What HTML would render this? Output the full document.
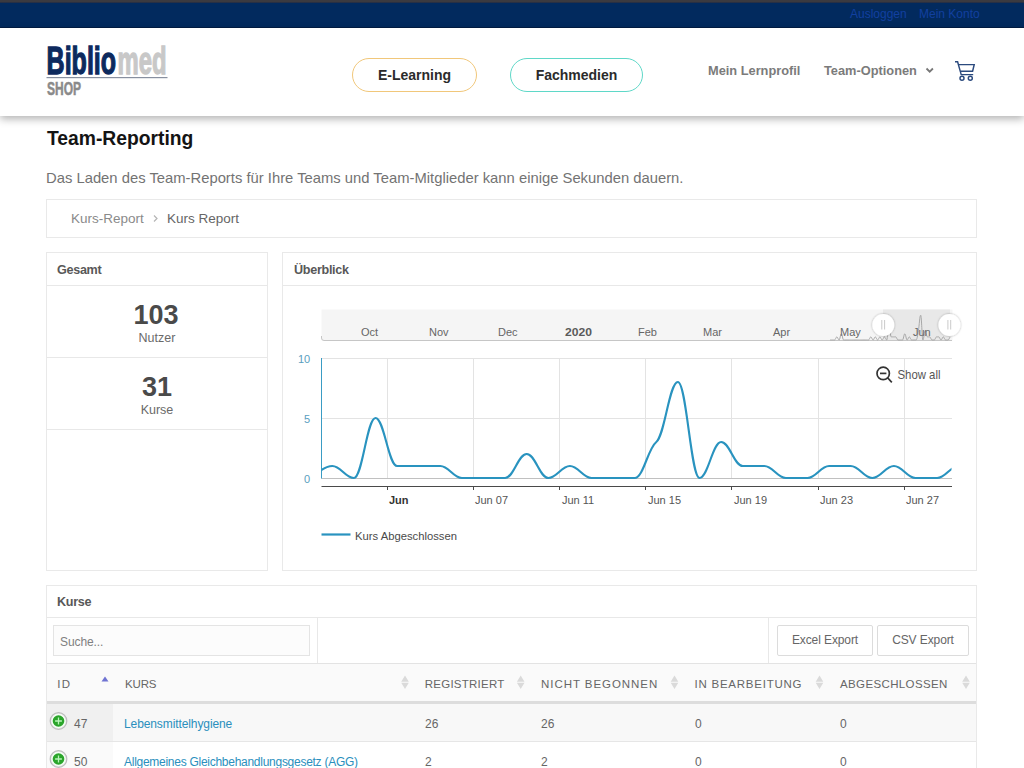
<!DOCTYPE html>
<html><head><meta charset="utf-8">
<style>
*{box-sizing:border-box;margin:0;padding:0}
html,body{width:1024px;height:768px;overflow:hidden;background:#fff;font-family:"Liberation Sans",sans-serif;position:relative}
.abs{position:absolute;white-space:nowrap}
#topline{left:0;top:0;width:1024px;height:3px;background:linear-gradient(#3b3a40 0,#3b3a40 55%,#1c2a48 100%);z-index:1}
#topbar{left:0;top:2px;width:1024px;height:26px;background:#022a5e;border-bottom:1px solid #011c44}
#topbar a{position:absolute;top:5px;font-size:12px;color:#1240a0;text-decoration:none}
#header{left:0;top:28px;width:1024px;height:88px;background:#fff;box-shadow:0 3px 8px rgba(0,0,0,.3);z-index:2}
.btn{position:absolute;height:34px;border-radius:17px;border:1.5px solid;font-weight:bold;font-size:14px;color:#2b2b2b;text-align:center;line-height:33px}
.nav{position:absolute;font-weight:bold;font-size:12.8px;color:#7b7b7b;top:35px}
h1{position:absolute;left:47px;top:128px;font-size:19.3px;font-weight:bold;color:#141414}
.sub{left:46px;top:169.5px;font-size:14.8px;color:#737373}
.box{position:absolute;border:1px solid #e9e9e9;background:#fff}
.ph{position:absolute;font-size:12.6px;font-weight:bold;color:#585858;letter-spacing:-0.3px}
.hr{position:absolute;height:1px;background:#e8e8e8}
.big{position:absolute;font-size:27px;font-weight:bold;color:#4a4a4a;text-align:center;width:222px;left:46px}
.lbl{position:absolute;font-size:12.5px;color:#6a6a6a;text-align:center;width:222px;left:46px}
.nl{font-size:11px;fill:#666}
.th{position:absolute;top:677px;font-size:11.5px;letter-spacing:1.6px;color:#555}
.td{position:absolute;font-size:12px;color:#666}
.lnk{color:#2a8fbd}
.sort{position:absolute;width:6px;height:12px}
.sort:before{content:"";position:absolute;left:0;top:0;border-left:3px solid transparent;border-right:3px solid transparent;border-bottom:4px solid #d6d6d6}
.sort:after{content:"";position:absolute;left:0;top:6px;border-left:3px solid transparent;border-right:3px solid transparent;border-top:4px solid #d6d6d6}
.plus{position:absolute;width:16px;height:16px;border-radius:50%;background:#31a831;border:2px solid #fff;box-shadow:0 0 2px 1px #9a9a9a}
.plus:before{content:"";position:absolute;left:5px;top:2px;width:2px;height:8px;background:#fff}
.plus:after{content:"";position:absolute;left:2px;top:5px;width:8px;height:2px;background:#fff}
.ebtn{position:absolute;top:625px;height:31px;border:1px solid #dcdcdc;border-radius:2px;background:#fff;font-size:12px;color:#666;letter-spacing:-0.1px;text-align:center;line-height:29px}
</style></head><body>
<div id="topline" class="abs"></div>
<div id="topbar" class="abs">
  <a style="left:850px">Ausloggen</a>
  <a style="left:919px">Mein Konto</a>
</div>
<div id="header" class="abs">
  <svg class="abs" style="left:0;top:0" width="200" height="88" viewBox="0 28 200 88">
    <text x="46.6" y="74.3" font-size="39" font-weight="bold" textLength="69.5" lengthAdjust="spacingAndGlyphs" fill="#0d2a5e" stroke="#0d2a5e" stroke-width="1.3">Biblio</text>
    <text x="117.6" y="74.3" font-size="39" font-weight="bold" textLength="49" lengthAdjust="spacingAndGlyphs" fill="#c8c8c8" stroke="#c8c8c8" stroke-width="1.3">med</text>
    <rect x="46.5" y="77" width="121" height="1.2" fill="#8890a0"/>
    <text x="47" y="94.6" font-size="17.5" font-weight="bold" textLength="34" lengthAdjust="spacingAndGlyphs" fill="#8a8a8a" stroke="#8a8a8a" stroke-width="0.5">SHOP</text>
  </svg>
  <div class="btn" style="left:352px;top:30px;width:125px;border-color:#f1c77a">E-Learning</div>
  <div class="btn" style="left:510px;top:30px;width:133px;border-color:#5fd8c8">Fachmedien</div>
  <div class="nav" style="left:708px">Mein Lernprofil</div>
  <div class="nav" style="left:824px">Team-Optionen</div>
  <svg class="abs" style="left:0;top:0" width="1024" height="88" viewBox="0 28 1024 88">
    <path d="M926.5 68.5 L929.7 71.7 L932.9 68.5" fill="none" stroke="#777" stroke-width="1.8"/>
    <g fill="none" stroke="#2b4a7e" stroke-width="1.45">
      <path d="M955 61.8 H957.6 L961.2 74.6 H973.2"/>
      <path d="M958.6 64.6 H974.2 L972.6 71.2 H960.4"/>
      <circle cx="962" cy="78.3" r="2"/><circle cx="970.3" cy="78.3" r="2"/>
    </g>
  </svg>
</div>
<h1 class="abs">Team-Reporting</h1>
<div class="abs sub">Das Laden des Team-Reports für Ihre Teams und Team-Mitglieder kann einige Sekunden dauern.</div>

<div class="box" style="left:46px;top:199px;width:931px;height:39px"></div>
<div class="abs" style="left:71px;top:211px;font-size:13.5px;color:#8a8a8a">Kurs-Report</div>
<svg class="abs" style="left:150px;top:212px" width="10" height="12"><path d="M4 3.5 L7 6.5 L4 9.5" fill="none" stroke="#b5b5b5" stroke-width="1.2"/></svg>
<div class="abs" style="left:167px;top:211px;font-size:13.5px;color:#666">Kurs Report</div>

<!-- Gesamt -->
<div class="box" style="left:46px;top:252px;width:222px;height:319px"></div>
<div class="ph abs" style="left:57px;top:263px">Gesamt</div>
<div class="hr" style="left:47px;top:285px;width:220px"></div>
<div class="big abs" style="top:299.5px;left:45px">103</div>
<div class="lbl abs" style="top:331px">Nutzer</div>
<div class="hr" style="left:47px;top:357px;width:220px"></div>
<div class="big abs" style="top:371.5px">31</div>
<div class="lbl abs" style="top:403px">Kurse</div>
<div class="hr" style="left:47px;top:429px;width:220px"></div>

<!-- Ueberblick -->
<div class="box" style="left:282px;top:252px;width:695px;height:319px"></div>
<div class="ph abs" style="left:294px;top:263px">Überblick</div>
<div class="hr" style="left:283px;top:285px;width:693px"></div>

<svg class="abs" style="left:0;top:0" width="1024" height="768">
  <defs><clipPath id="pc"><rect x="321.5" y="350" width="630" height="135"/></clipPath>
  <filter id="sh" x="-50%" y="-50%" width="200%" height="200%"><feDropShadow dx="0" dy="0" stdDeviation="1.2" flood-color="#000" flood-opacity="0.35"/></filter></defs>
  <!-- navigator -->
  <rect x="321.5" y="309.5" width="631" height="31" fill="#f5f5f5"/>
  <rect x="883" y="309.5" width="67" height="31" fill="#e8e8e8"/>
  <path d="M321.5 336 V338 Q321.5 340.5 324 340.5 H952" fill="none" stroke="#c6c6c6" stroke-width="1"/>
  <path d="M830.0 340.0 C830.0 340.0 831.4 340.0 832.3 340.0 C833.2 340.0 833.6 340.0 834.5 340.0 C835.5 340.0 835.9 336.9 836.8 336.9 C837.7 336.9 838.2 340.0 839.1 340.0 C840.0 340.0 840.4 333.8 841.3 333.8 C842.3 333.8 842.7 340.0 843.6 340.0 C844.5 340.0 845.0 340.0 845.9 340.0 C846.8 340.0 847.2 340.0 848.1 340.0 C849.1 340.0 849.5 340.0 850.4 340.0 C851.3 340.0 851.8 340.0 852.7 340.0 C853.6 340.0 854.0 340.0 854.9 340.0 C855.8 340.0 856.3 340.0 857.2 340.0 C858.1 340.0 858.6 340.0 859.5 340.0 C860.4 340.0 860.8 340.0 861.7 340.0 C862.6 340.0 863.1 340.0 864.0 340.0 C864.9 340.0 865.4 340.0 866.3 340.0 C867.2 340.0 867.6 340.0 868.5 340.0 C869.4 340.0 869.9 336.9 870.8 336.9 C871.7 336.9 872.2 340.0 873.1 340.0 C874.0 340.0 874.4 336.9 875.3 336.9 C876.2 336.9 876.7 340.0 877.6 340.0 C878.5 340.0 879.0 336.9 879.9 336.9 C880.8 336.9 881.2 340.0 882.1 340.0 C883.0 340.0 883.5 336.9 884.4 336.9 C885.3 336.9 885.8 340.0 886.7 340.0 C887.6 340.0 888.0 324.5 888.9 324.5 C889.8 324.5 890.3 336.9 891.2 336.9 C892.1 336.9 892.6 336.9 893.5 336.9 C894.4 336.9 894.8 336.9 895.7 336.9 C896.6 336.9 897.1 340.0 898.0 340.0 C898.9 340.0 899.4 340.0 900.3 340.0 C901.2 340.0 901.6 340.0 902.5 340.0 C903.4 340.0 903.9 333.8 904.8 333.8 C905.7 333.8 906.2 340.0 907.1 340.0 C908.0 340.0 908.4 336.9 909.3 336.9 C910.2 336.9 910.7 340.0 911.6 340.0 C912.5 340.0 913.0 340.0 913.9 340.0 C914.8 340.0 915.2 340.0 916.1 340.0 C917.0 340.0 917.5 335.7 918.4 330.7 C919.3 325.7 919.7 315.2 920.7 315.2 C921.6 315.2 922.0 340.0 922.9 340.0 C923.8 340.0 924.3 330.7 925.2 330.7 C926.1 330.7 926.5 336.9 927.5 336.9 C928.4 336.9 928.8 336.9 929.7 336.9 C930.6 336.9 931.1 340.0 932.0 340.0 C932.9 340.0 933.3 340.0 934.3 340.0 C935.2 340.0 935.6 336.9 936.5 336.9 C937.4 336.9 937.9 336.9 938.8 336.9 C939.7 336.9 940.1 340.0 941.0 340.0 C942.0 340.0 942.4 336.9 943.3 336.9 C944.2 336.9 944.7 340.0 945.6 340.0 C946.5 340.0 946.9 340.0 947.8 340.0 C948.8 340.0 950.1 336.9 950.1 336.9" fill="none" stroke="#a8a8a8" stroke-width="1"/>
  <g class="nl">
    <text x="361" y="336">Oct</text><text x="429" y="336">Nov</text><text x="498" y="336">Dec</text>
    <text x="565" y="336" font-weight="bold" fill="#5a5a5a" textLength="27" lengthAdjust="spacingAndGlyphs">2020</text><text x="638" y="336">Feb</text><text x="703" y="336">Mar</text>
    <text x="773" y="336">Apr</text><text x="840" y="336">May</text><text x="913" y="336">Jun</text>
  </g>
  <g filter="url(#sh)">
    <circle cx="883.3" cy="325" r="11" fill="#fff"/>
    <circle cx="949.4" cy="325" r="11" fill="#fff"/>
  </g>
  <g stroke="#c4c4c4" stroke-width="0.9">
    <path d="M881.8 320 V329.5 M884.6 320 V329.5 M947.9 320 V329.5 M950.7 320 V329.5"/>
  </g>
  <!-- grid -->
  <g stroke="#e3e3e3" stroke-width="1">
    <path d="M321.5 358.5 H952 M321.5 418.5 H952"/>
    <path d="M387.5 358.5 V478 M473.5 358.5 V478 M559.5 358.5 V478 M645.5 358.5 V478 M731.5 358.5 V478 M818.5 358.5 V478 M904.5 358.5 V478"/>
  </g>
  <path d="M321.5 478.5 H952" stroke="#c0c0c0" stroke-width="1"/>
  <path d="M321.5 358 V478.5" stroke="#3a9cc4" stroke-width="1"/>
  <path d="M321.5 486.5 H952" stroke="#4a4a4a" stroke-width="1.2"/>
  <path d="M387.5 486 V490 M473.5 486 V490 M559.5 486 V490 M645.5 486 V490 M731.5 486 V490 M818.5 486 V490 M904.5 486 V490" stroke="#4a4a4a" stroke-width="1"/>
  <g font-size="11" fill="#5a9ec0"><text x="298" y="363">10</text><text x="304" y="423">5</text><text x="304" y="483">0</text></g>
  <g font-size="11" fill="#555">
    <text x="389" y="504" font-weight="bold" fill="#333">Jun</text><text x="475" y="504">Jun 07</text><text x="562" y="504">Jun 11</text>
    <text x="648" y="504">Jun 15</text><text x="734" y="504">Jun 19</text><text x="820" y="504">Jun 23</text><text x="906" y="504">Jun 27</text>
  </g>
  <path clip-path="url(#pc)" d="M310.7 478.0 C310.7 478.0 323.7 466.0 332.3 466.0 C340.9 466.0 345.3 478.0 353.9 478.0 C362.5 478.0 366.9 418.0 375.5 418.0 C384.1 418.0 388.5 466.0 397.1 466.0 C405.7 466.0 410.1 466.0 418.7 466.0 C427.3 466.0 431.7 466.0 440.3 466.0 C448.9 466.0 453.3 478.0 461.9 478.0 C470.5 478.0 474.9 478.0 483.5 478.0 C492.1 478.0 496.5 478.0 505.1 478.0 C513.7 478.0 518.1 454.0 526.7 454.0 C535.3 454.0 539.7 478.0 548.3 478.0 C556.9 478.0 561.3 466.0 569.9 466.0 C578.5 466.0 582.9 478.0 591.5 478.0 C600.1 478.0 604.5 478.0 613.1 478.0 C621.7 478.0 626.1 478.0 634.7 478.0 C643.3 478.0 647.7 448.9 656.3 442.0 C664.9 435.1 669.3 382.0 677.9 382.0 C686.5 382.0 690.9 478.0 699.5 478.0 C708.1 478.0 712.5 442.0 721.1 442.0 C729.7 442.0 734.1 466.0 742.7 466.0 C751.3 466.0 755.7 466.0 764.3 466.0 C772.9 466.0 777.3 478.0 785.9 478.0 C794.5 478.0 798.9 478.0 807.5 478.0 C816.1 478.0 820.5 466.0 829.1 466.0 C837.7 466.0 842.1 466.0 850.7 466.0 C859.3 466.0 863.7 478.0 872.3 478.0 C880.9 478.0 885.3 466.0 893.9 466.0 C902.5 466.0 906.9 478.0 915.5 478.0 C924.1 478.0 928.5 478.0 937.1 478.0 C945.7 478.0 950.1 466.0 958.7 466.0 C967.3 466.0 980.3 478.0 980.3 478.0" fill="none" stroke="#2993bf" stroke-width="2.1"/>
  <!-- show all -->
  <g fill="none" stroke="#333" stroke-width="1.7"><circle cx="883.2" cy="373.4" r="6.2"/><path d="M887.6 377.8 L891.8 382.4"/><path d="M880 373.4 H886.4"/></g>
  <text x="897.5" y="378.8" font-size="12.2" fill="#555" textLength="43" lengthAdjust="spacingAndGlyphs">Show all</text>
  <!-- legend -->
  <path d="M321.5 534.5 H350.5" stroke="#2993bf" stroke-width="2.2"/>
  <text x="355" y="540" font-size="11.5" fill="#4a4a4a" textLength="102" lengthAdjust="spacingAndGlyphs">Kurs Abgeschlossen</text>
</svg>

<!-- Kurse -->
<div class="box" style="left:46px;top:585px;width:931px;height:200px"></div>
<div class="ph abs" style="left:57px;top:595px">Kurse</div>
<div class="hr" style="left:47px;top:617px;width:929px"></div>
<div class="abs" style="left:53px;top:625px;width:257px;height:31px;border:1px solid #e4e4e4;background:#fcfcfc;font-size:12px;color:#808080;padding:8.5px 0 0 6px;letter-spacing:-0.1px">Suche...</div>
<div class="abs" style="left:317px;top:618px;width:1px;height:45px;background:#e8e8e8"></div>
<div class="abs" style="left:768px;top:618px;width:1px;height:45px;background:#e8e8e8"></div>
<div class="ebtn" style="left:777px;width:96px">Excel Export</div>
<div class="ebtn" style="left:877px;width:92px">CSV Export</div>
<div class="abs" style="left:47px;top:663px;width:929px;height:38px;background:#fafafa;border-top:1px solid #e3e3e3"></div>
<div class="abs" style="left:47px;top:701px;width:929px;height:3px;background:#dddddd"></div>
<svg class="abs" style="left:0;top:660px" width="1024" height="45" viewBox="0 660 1024 45">
  <g font-size="11.5" fill="#666">
    <text x="57.3" y="688" letter-spacing="1.2">ID</text>
    <text x="125" y="688" textLength="31.5" lengthAdjust="spacing">KURS</text>
    <text x="424.8" y="688" textLength="79.5" lengthAdjust="spacing">REGISTRIERT</text>
    <text x="541" y="688" textLength="116.3" lengthAdjust="spacing">NICHT BEGONNEN</text>
    <text x="694.5" y="688" textLength="107" lengthAdjust="spacing">IN BEARBEITUNG</text>
    <text x="840" y="688" textLength="107.3" lengthAdjust="spacing">ABGESCHLOSSEN</text>
  </g>
  <path d="M101.5 681.5 L105 676.5 L108.5 681.5Z" fill="#6f73d2"/>
  <g fill="#dadada"><path d="M401.2 681.8 L405.0 675.5 L408.8 681.8Z M401.2 682.8 L405.0 689 L408.8 682.8Z"/><path d="M516.9 681.8 L520.7 675.5 L524.5 681.8Z M516.9 682.8 L520.7 689 L524.5 682.8Z"/><path d="M670.7 681.8 L674.5 675.5 L678.3 681.8Z M670.7 682.8 L674.5 689 L678.3 682.8Z"/><path d="M815.7 681.8 L819.5 675.5 L823.3 681.8Z M815.7 682.8 L819.5 689 L823.3 682.8Z"/><path d="M962.2 681.8 L966.0 675.5 L969.8 681.8Z M962.2 682.8 L966.0 689 L969.8 682.8Z"/></g>
</svg>
<div class="abs" style="left:47px;top:704px;width:929px;height:37px;background:#f8f8f8"></div>
<div class="abs" style="left:47px;top:704px;width:66px;height:37px;background:#f0f0f0"></div>
<div class="abs" style="left:47px;top:741px;width:929px;height:1px;background:#e6e6e6"></div>
<div class="abs" style="left:47px;top:742px;width:66px;height:30px;background:#fafafa"></div>
<svg class="abs" style="left:46px;top:709px" width="26" height="26"><circle cx="12.5" cy="12" r="8.3" fill="#e6e6e6" stroke="#bdbdbd" stroke-width="1.2"/><circle cx="12.5" cy="12" r="7.2" fill="#f4fff4"/><circle cx="12.5" cy="12" r="5.8" fill="#2ba52b"/><path d="M12.5 8.6 V15.4 M9.1 12 H15.9" stroke="#b9f5b9" stroke-width="1.3"/></svg>
<div class="td abs" style="left:74px;top:717px">47</div>
<div class="td abs lnk" style="left:124px;top:717px;letter-spacing:-0.1px">Lebensmittelhygiene</div>
<div class="td abs" style="left:425px;top:717px">26</div>
<div class="td abs" style="left:541px;top:717px">26</div>
<div class="td abs" style="left:695px;top:717px">0</div>
<div class="td abs" style="left:840px;top:717px">0</div>
<svg class="abs" style="left:46px;top:746.5px" width="26" height="26"><circle cx="12.5" cy="12" r="8.3" fill="#e6e6e6" stroke="#bdbdbd" stroke-width="1.2"/><circle cx="12.5" cy="12" r="7.2" fill="#f4fff4"/><circle cx="12.5" cy="12" r="5.8" fill="#2ba52b"/><path d="M12.5 8.6 V15.4 M9.1 12 H15.9" stroke="#b9f5b9" stroke-width="1.3"/></svg>
<div class="td abs" style="left:74px;top:755px">50</div>
<div class="td abs lnk" style="left:124px;top:755px;letter-spacing:-0.27px">Allgemeines Gleichbehandlungsgesetz (AGG)</div>
<div class="td abs" style="left:425px;top:755px">2</div>
<div class="td abs" style="left:541px;top:755px">2</div>
<div class="td abs" style="left:695px;top:755px">0</div>
<div class="td abs" style="left:840px;top:755px">0</div>
</body></html>
